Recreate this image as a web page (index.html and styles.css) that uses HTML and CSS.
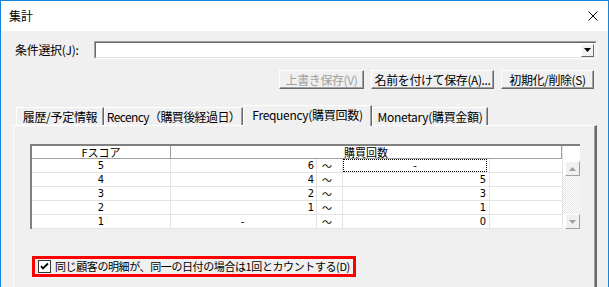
FILE: index.html
```html
<!DOCTYPE html>
<html lang="ja">
<head>
  <meta charset="UTF-8">
  <title>集計</title>
  <link rel="stylesheet" href="styles.css">
</head>
<body>
  <div class="window">
    <!-- Title bar -->
    <div class="titlebar">
      <span class="title">集計</span>
      <svg class="close-icon" width="10" height="10" viewBox="0 0 10 10">
        <path d="M0.5 0.5 L9.5 9.5 M9.5 0.5 L0.5 9.5" stroke="#000" stroke-width="1" fill="none"/>
      </svg>
    </div>

    <div class="client">
      <div class="cond-row">
        <label class="cond-label">条件選択(J):</label>
        <div class="combo">
          <span class="combo-btn">
            <svg width="7" height="4" viewBox="0 0 7 4"><path d="M0 0 H7 L3.5 4 Z" fill="#000"/></svg>
          </span>
        </div>
      </div>

      <div class="btn-row">
        <button class="btn" disabled>上書き保存(V)</button>
        <button class="btn btn-wide">名前を付けて保存(A)...</button>
        <button class="btn btn-mid">初期化/削除(S)</button>
      </div>

      <!-- Tabs -->
      <div class="tabs">
        <div class="tab tab-history">履歴/予定情報</div>
        <div class="tab tab-recency">Recency（購買後経過日）</div>
        <div class="tab tab-frequency active">Frequency(購買回数)</div>
        <div class="tab tab-monetary">Monetary(購買金額)</div>
      </div>

      <div class="panel">
        <div class="grid">
          <div class="grid-main">
            <div class="grid-head">
              <div class="hcell">Fスコア</div>
              <div class="hcell">購買回数</div>
            </div>
            <div class="grid-rows" id="grid-rows"></div>
          </div>
          <div class="vscroll">
            <div class="vscroll-gap"></div>
            <div class="sb-btn">
              <svg width="7" height="4" viewBox="0 0 7 4"><path d="M0 4 H7 L3.5 0 Z" fill="#a0a0a0"/></svg>
            </div>
            <div class="sb-track"></div>
            <div class="sb-btn">
              <svg width="7" height="4" viewBox="0 0 7 4"><path d="M0 0 H7 L3.5 4 Z" fill="#a0a0a0"/></svg>
            </div>
          </div>
        </div>

        <div class="option">
          <svg class="chk" width="13" height="13" viewBox="0 0 13 13">
            <rect x="0.5" y="0.5" width="12" height="12" fill="#fff" stroke="#333"/>
            <path d="M3 6 L5 8.5 L10 3.5" stroke="#000" stroke-width="1.8" fill="none"/>
          </svg>
          <span class="option-text">同じ顧客の明細が、同一の日付の場合は1回とカウントする(D)</span>
        </div>
      </div>
    </div>
  </div>

  <script>
    // F score rows: score, from, to (count)
    const rows = [
      { score: '5', from: '6', count: '-', focus: true },
      { score: '4', from: '4', count: '5' },
      { score: '3', from: '2', count: '3' },
      { score: '2', from: '1', count: '1' },
      { score: '1', from: '-', count: '0', dashFrom: true }
    ];

    const gridRows = document.getElementById('grid-rows');
    rows.forEach(r => {
      const cells = [
        { cls: 'c-score', text: r.score },
        { cls: r.dashFrom ? 'c-from c-dash' : 'c-from', text: r.from },
        { cls: 'c-tilde', text: '〜' },
        { cls: r.focus ? 'c-count c-focus' : 'c-count', text: r.count },
        { cls: 'c-empty', text: '' }
      ];
      cells.forEach(c => {
        const div = document.createElement('div');
        div.className = 'cell ' + c.cls;
        if (c.cls.includes('c-focus')) {
          const inner = document.createElement('span');
          inner.className = 'focus-box';
          inner.textContent = c.text;
          div.appendChild(inner);
        } else {
          div.textContent = c.text;
        }
        gridRows.appendChild(div);
      });
    });
  </script>
</body>
</html>
```

FILE: styles.css
```css
/* Base */
body {
  margin: 0;
  width: 609px;
  height: 287px;
  overflow: hidden;
  font-family: "Noto Sans CJK JP", sans-serif;
  font-size: 12px;
  color: #000;
  background: #fff;
}
.window {
  box-sizing: border-box;
  width: 609px;
  height: 287px;
  border: 1px solid #1883d7;
  border-bottom: none;
  display: flex;
  flex-direction: column;
}
/* Title bar */
.titlebar {
  height: 30px;
  flex: none;
  background: #fff;
  display: flex;
  align-items: center;
  justify-content: space-between;
  padding: 0 10px 0 8px;
}
.title {
  font-size: 12px;
  line-height: 14px;
}
.close-icon {
  display: block;
}
/* Client area */
.client {
  flex: 1;
  background: #f0f0f0;
  padding: 10px 11px 0 14px;
  display: flex;
  flex-direction: column;
  min-height: 0;
}
.cond-row {
  display: flex;
  height: 18px;
}
.cond-label {
  width: 79px;
  line-height: 18px;
  letter-spacing: -0.3px;
}
.combo {
  flex: 1;
  box-sizing: border-box;
  background: #fff;
  border: 1px solid;
  border-color: #a0a0a0 #fff #fff #a0a0a0;
  display: flex;
  justify-content: flex-end;
  align-items: center;
  padding-right: 2px;
  position: relative;
}
.combo::before {
  content: "";
  position: absolute;
  left: 0;
  top: 0;
  right: 0;
  bottom: 0;
  border-top: 1px solid #696969;
  border-left: 1px solid #696969;
  border-right: 1px solid #e3e3e3;
  border-bottom: 1px solid #e3e3e3;
  pointer-events: none;
}
.combo-btn {
  box-sizing: border-box;
  width: 13px;
  height: 13px;
  background: #f0f0f0;
  border: 1px solid;
  border-color: #fff #696969 #696969 #fff;
  display: flex;
  align-items: center;
  justify-content: center;
}
/* Buttons */
.btn-row {
  display: flex;
  justify-content: flex-end;
  gap: 7px;
  margin-top: 11px;
  margin-right: 3px;
}
.btn {
  box-sizing: border-box;
  height: 19px;
  width: 85px;
  padding: 0;
  font-family: inherit;
  font-size: 12px;
  letter-spacing: -0.4px;
  line-height: 15px;
  white-space: nowrap;
  color: #000;
  background: #f0f0f0;
  border: 1px solid;
  border-color: #fff #696969 #696969 #fff;
  box-shadow: inset -1px -1px #a0a0a0;
}
.btn:disabled {
  color: #a0a0a0;
}
.btn-wide {
  width: 123px;
}
.btn-mid {
  width: 93px;
}
/* Tabs */
.tabs {
  display: flex;
  align-items: flex-end;
  height: 20px;
  margin-top: 16px;
  padding-left: 1px;
}
.tab {
  box-sizing: border-box;
  height: 18px;
  line-height: 17px;
  text-align: center;
  white-space: nowrap;
  letter-spacing: -0.3px;
  background: #f0f0f0;
  border-top: 1px solid #fff;
  border-left: 1px solid #fff;
  border-right: 1px solid #696969;
  box-shadow: inset -1px 0 #a0a0a0;
}
.tab-history { width: 88px; }
.tab-recency { width: 139px; letter-spacing: -0.6px; }
.tab-frequency { width: 129px; }
.tab-monetary { width: 116px; }
.tab.active {
  height: 21px;
  margin-bottom: -1px;
  line-height: 17px;
  position: relative;
  z-index: 1;
}
/* Tab panel */
.panel {
  flex: 1;
  margin-left: -2px;
  border-top: 1px solid #fff;
  border-left: 1px solid #fff;
  border-right: 2px solid #696969;
  box-shadow: inset -1px 0 #a0a0a0;
  padding: 18px 0 0 16px;
}
/* Grid */
.grid {
  display: flex;
  width: 548px;
  border-top: 2px solid #808080;
  border-left: 2px solid #808080;
  background: #fff;
}
.grid-main {
  width: 530px;
}
.grid-head {
  display: grid;
  grid-template-columns: 139px 391px;
  height: 13px;
}
.hcell {
  box-sizing: border-box;
  border-right: 1px solid #a0a0a0;
  border-bottom: 1px solid #a0a0a0;
  text-align: center;
  line-height: 12px;
  font-size: 11px;
}
.grid-rows {
  display: grid;
  grid-template-columns: 139px 146px 26px 147px 72px;
  grid-auto-rows: 14px;
}
.cell {
  box-sizing: border-box;
  border-right: 1px solid #e3e3e3;
  border-bottom: 1px solid #e3e3e3;
  font-family: "DejaVu Sans Condensed", "Noto Sans CJK JP", sans-serif;
  line-height: 13px;
  font-size: 11px;
  white-space: nowrap;
}
.c-score { text-align: center; }
.c-from { text-align: right; padding-right: 2px; }
.c-dash { text-align: center; }
.c-tilde {
  padding-left: 5px;
  font-family: "Noto Sans CJK JP", sans-serif;
  font-size: 10px;
}
.c-count { text-align: right; padding-right: 3px; }
.c-focus { padding: 0 2px 0 0; }
.focus-box {
  display: block;
  box-sizing: border-box;
  height: 13px;
  border: 1px dotted #000;
  text-align: center;
  line-height: 11px;
}
.c-empty { border-right: none; }
/* Vertical scrollbar */
.vscroll {
  width: 18px;
  display: flex;
  flex-direction: column;
  border-left: 1px solid #e3e3e3;
  box-sizing: border-box;
}
.vscroll-gap {
  height: 15px;
  background: #fff;
}
.sb-btn {
  box-sizing: border-box;
  width: 15px;
  height: 15px;
  margin-left: 2px;
  background: #f0f0f0;
  border: 1px solid;
  border-color: #fff #a0a0a0 #a0a0a0 #fff;
  display: flex;
  align-items: center;
  justify-content: center;
}
.sb-track {
  flex: 1;
  background: repeating-conic-gradient(#e6e6e6 0 25%, #fff 0 50%) 0 0 / 2px 2px;
}
/* Option checkbox */
.option {
  box-sizing: border-box;
  width: 324px;
  height: 21px;
  margin: 27px 0 0 2px;
  border: 3px solid #f00;
  display: flex;
  align-items: center;
  gap: 4px;
  padding-left: 3px;
}
.chk {
  display: block;
  flex: none;
}
.option-text {
  font-size: 11px;
  letter-spacing: -0.4px;
  line-height: 15px;
  white-space: nowrap;
}
```
